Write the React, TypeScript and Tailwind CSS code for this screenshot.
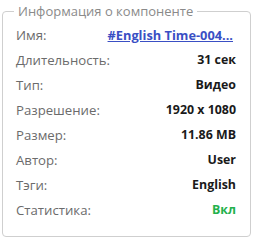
import React from 'react';

const ROWS: { label: string; value: string; kind?: 'link' | 'on' }[] = [
  { label: 'Имя:', value: '#English Time-004...', kind: 'link' },
  { label: 'Длительность:', value: '31 сек' },
  { label: 'Тип:', value: 'Видео' },
  { label: 'Разрешение:', value: '1920 x 1080' },
  { label: 'Размер:', value: '11.86 MB' },
  { label: 'Автор:', value: 'User' },
  { label: 'Тэги:', value: 'English' },
  { label: 'Статистика:', value: 'Вкл', kind: 'on' },
];

export default function App() {
  return (
    <div className="w-[255px] h-[241px] bg-white pl-[2px] pr-[4px] pt-[2px] font-['Open_Sans',sans-serif]">
      <fieldset className="border border-[#cfcfcf] rounded-[4px] pl-[13px] pr-[14px] pb-[12px] h-[235px]">
        <legend className="-ml-[2px] px-[4px] text-[13px] leading-[18px] text-[#8a8a8a]">
          Информация о компоненте
        </legend>
        <div className="flex flex-col pt-[3px]">
          {ROWS.map(row => (
            <div key={row.label} className="flex items-center justify-between h-[25px] text-[13.2px] gap-3">
              <span className="text-[#6b6b6b] shrink-0">{row.label}</span>
              {row.kind === 'link' ? (
                <a className="block font-bold text-[12.8px] mr-[3px] text-[#3a4fc4] underline whitespace-nowrap">{row.value}</a>
              ) : (
                <span className={(row.kind === 'on' ? 'text-[#22b14c]' : 'text-[#1a1a1a]') + ' font-bold text-[12.4px]'}>
                  {row.value}
                </span>
              )}
            </div>
          ))}
        </div>
      </fieldset>
    </div>
  );
}
